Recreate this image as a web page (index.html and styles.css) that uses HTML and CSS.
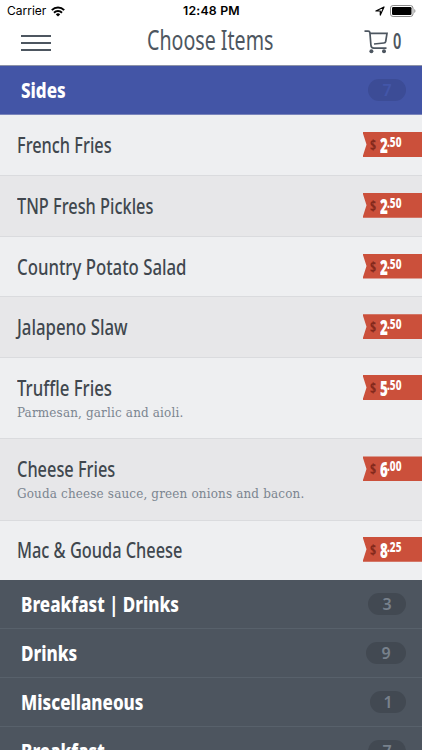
FILE: index.html
```
<!DOCTYPE html>
<html lang="en">
<head>
  <meta charset="UTF-8">
  <title>Choose Items</title>
  <link rel="stylesheet" href="styles.css">
</head>
<body>
  <div class="status-bar">
    <div class="carrier">
      <span>Carrier</span>
      <svg width="14" height="11" viewBox="0 0 14 11" fill="none" stroke="#000" stroke-width="2">
        <path d="M.8 4.1a8.8 8.8 0 0 1 12.4 0M3 6.7a5.7 5.7 0 0 1 8 0"/>
        <path d="M7 10.6L4.8 8.4a3.1 3.1 0 0 1 4.4 0z" fill="#000" stroke="none"/>
      </svg>
    </div>
    <div class="clock">12:48 PM</div>
    <div class="indicators">
      <svg width="10" height="10" viewBox="0 0 10 10" fill="none" stroke="#000" stroke-width="1.2" stroke-linejoin="round">
        <path d="M.9 5L9 1 5.3 9.1V5z"/>
      </svg>
      <svg width="26" height="12" viewBox="0 0 26 12">
        <rect x=".5" y=".5" width="22.5" height="11" rx="2.6" fill="none" stroke="#8a8a8a"/>
        <rect x="2" y="2" width="19.5" height="8" rx="1.2"/>
        <path d="M24.3 4v4c1.5-.6 1.5-3.4 0-4z" fill="#8a8a8a"/>
      </svg>
    </div>
  </div>

  <header class="nav-bar">
    <div class="menu-btn"><i></i><i></i><i></i></div>
    <h1><span>Choose Items</span></h1>
    <div class="cart">
      <svg width="25" height="24" viewBox="0 0 25 24" fill="none" stroke="#4d5660" stroke-width="1.7">
        <path d="M.5 1.2h3.6c1 0 1.7.5 1.8 1.5l1 12.3c.1 2 1 3.1 3 3.1h12.6"/>
        <path d="M6 3.3h17l-1.3 8.2c-.2 1-.8 1.4-1.8 1.5l-9.9 1"/>
        <circle cx="7.4" cy="21.2" r="2" fill="#4d5660" stroke="none"/>
        <circle cx="20" cy="21.2" r="2" fill="#4d5660" stroke="none"/>
      </svg>
      <span>0</span>
    </div>
  </header>

  <div class="section active"><h2>Sides</h2><div class="count">7</div></div>

  <div class="items">
    <div class="item"><h3>French Fries</h3><div class="tag"><b class="cur">$</b><b class="num">2</b><b class="dec">.50</b></div></div>
    <div class="item alt"><h3>TNP Fresh Pickles</h3><div class="tag"><b class="cur">$</b><b class="num">2</b><b class="dec">.50</b></div></div>
    <div class="item loose"><h3>Country Potato Salad</h3><div class="tag"><b class="cur">$</b><b class="num">2</b><b class="dec">.50</b></div></div>
    <div class="item alt loose"><h3>Jalapeno Slaw</h3><div class="tag"><b class="cur">$</b><b class="num">2</b><b class="dec">.50</b></div></div>
    <div class="item tall loose">
      <div><h3>Truffle Fries</h3><p>Parmesan, garlic and aioli.</p></div>
      <div class="tag"><b class="cur">$</b><b class="num">5</b><b class="dec">.50</b></div>
    </div>
    <div class="item alt tall">
      <div><h3>Cheese Fries</h3><p>Gouda cheese sauce, green onions and bacon.</p></div>
      <div class="tag"><b class="cur">$</b><b class="num">6</b><b class="dec">.00</b></div>
    </div>
    <div class="item last"><h3>Mac &amp; Gouda Cheese</h3><div class="tag"><b class="cur">$</b><b class="num">8</b><b class="dec">.25</b></div></div>
  </div>

  <div class="section"><h2>Breakfast | Drinks</h2><div class="count">3</div></div>
  <div class="section"><h2>Drinks</h2><div class="count wide">9</div></div>
  <div class="section"><h2>Miscellaneous</h2><div class="count slim">1</div></div>
  <div class="section"><h2>Breakfast</h2><div class="count">7</div></div>
</body>
</html>
```
FILE: styles.css
```
* {
  box-sizing: border-box;
}

body {
  margin: 0;
  height: 750px;
  overflow: hidden;
  background: #fff;
  color: #40474e;
  font-family: "Noto Sans", sans-serif;
}

h1, h2, h3, p {
  margin: 0;
  white-space: nowrap;
}

/* status bar */
.status-bar {
  display: grid;
  grid-template-columns: 1fr auto 1fr;
  align-items: center;
  height: 22px;
  padding: 0 6px 0 7px;
  font: 12px/22px Inter, sans-serif;
  color: #000;
}

.carrier, .indicators {
  display: flex;
  align-items: center;
  gap: 5px;
}

.indicators {
  justify-content: flex-end;
}

.clock {
  font-weight: 600;
  font-size: 12.3px;
  letter-spacing: .2px;
}

/* title bar */
.nav-bar {
  display: grid;
  grid-template-columns: 1fr auto 1fr;
  height: 44px;
  padding: 0 20px 0 21px;
  border-bottom: 1px solid #8d93a8;
}

.menu-btn {
  display: flex;
  flex-direction: column;
  gap: 5px;
  padding-top: 13px;
}

.menu-btn i {
  width: 30px;
  height: 2px;
  background: #4d5660;
}

.nav-bar h1 {
  width: 129px;
  font-size: 27px;
  line-height: 36px;
  font-weight: 400;
  color: #4d5660;
}

.nav-bar h1 span {
  display: inline-block;
  transform: scaleX(.727);
  transform-origin: left;
}

.cart {
  display: flex;
  justify-content: flex-end;
  gap: 4px;
  padding-top: 8px;
  color: #4d5660;
}

.cart span {
  width: 9px;
  font-size: 22px;
  line-height: 21px;
  font-weight: 600;
  transform: scaleX(.66);
  transform-origin: left;
}

/* category rows */
.section {
  display: flex;
  align-items: center;
  justify-content: space-between;
  height: 49px;
  padding: 1px 16px 0 21px;
  background: #4d555f;
  border-bottom: 1px solid #58616b;
}

.section.active {
  padding-top: 0;
  background: #4355a6;
  border-bottom-color: #7984bb;
}

.section h2 {
  font-size: 21px;
  line-height: 30px;
  font-weight: 800;
  color: #fff;
  transform: scaleX(.81);
  transform-origin: left;
}

.count {
  width: 38px;
  height: 22px;
  border-radius: 11px;
  background: #424952;
  color: #78818c;
  font-size: 16px;
  line-height: 22px;
  font-weight: 600;
  text-align: center;
}

.count.wide {
  width: 40px;
}

.count.slim {
  width: 36px;
}

.active .count {
  background: #3c4c96;
  color: #4356a9;
}

/* menu items */
.item {
  display: flex;
  justify-content: space-between;
  height: 60.75px;
  padding: 15px 0 0 17px;
  background: #eeeff1;
  border-bottom: 1px solid #dadbde;
}

.item.alt {
  background: #e7e7e9;
}

.item.tall {
  height: 81.4px;
}

.item.last {
  height: 59.2px;
  padding-top: 14px;
  border-bottom: 0;
}

.item h3 {
  font-size: 21.5px;
  line-height: 30px;
  font-weight: 500;
  transform: scaleX(.76);
  transform-origin: left;
}

.item.loose h3 {
  transform: scaleX(.78);
}

.item p {
  font-family: "DejaVu Serif Condensed", "DejaVu Serif", serif;
  font-size: 13.3px;
  line-height: 19px;
  letter-spacing: .17px;
  color: #7b8590;
}

.tag {
  display: flex;
  flex-shrink: 0;
  width: 59.5px;
  height: 25px;
  margin-top: 2px;
  padding-left: 7.5px;
  background: #cb503b;
  color: #fff;
  clip-path: polygon(0 0, 100% 0, 100% 100%, 0 100%, 4px 50%);
}

.tag b {
  transform-origin: left;
}

.cur {
  width: 9.5px;
  font-size: 14px;
  line-height: 26px;
  color: #84291c;
  transform: scaleX(.76);
}

.num {
  width: 7.5px;
  font-size: 21.5px;
  line-height: 25px;
  font-weight: 900;
  transform: scaleX(.62);
}

.dec {
  font-size: 14.5px;
  line-height: 19px;
  font-weight: 800;
  transform: scaleX(.69);
}
```
